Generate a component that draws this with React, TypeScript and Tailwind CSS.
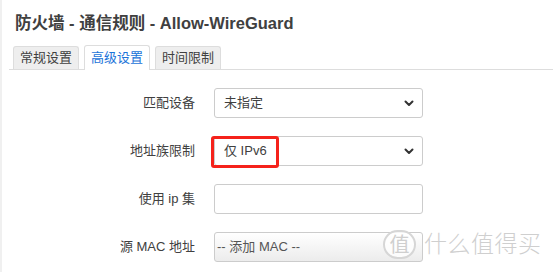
import React from 'react';

const font = { fontFamily: '"Liberation Sans", "Noto Sans CJK SC", sans-serif' };

function Chevron() {
  return (
    <svg width="10" height="7" viewBox="0 0 10 7" className="shrink-0">
      <path d="M1.5 1.5 L5 5 L8.5 1.5" fill="none" stroke="#333" strokeWidth="2" strokeLinecap="round" strokeLinejoin="round" />
    </svg>
  );
}

function Row({ label, children }: { label: string; children: React.ReactNode }) {
  return (
    <div className="flex items-center h-[30px]">
      <div className="w-[194px] pr-[1px] text-right text-[13px] text-[#404040]">{label}</div>
      <div className="ml-[18px] w-[209px]">{children}</div>
    </div>
  );
}

export default function App() {
  const tabs = ['常规设置', '高级设置', '时间限制'];

  return (
    <div style={font} className="relative w-[553px] h-[272px] overflow-hidden bg-white border-l-2 border-[#f0f0f0]">
      {/* Title */}
      <h2 className="pt-[12px] pl-[13px] text-[16.5px] leading-[23px] font-bold text-[#404040]">
        防火墙 - 通信规则 - Allow-WireGuard
      </h2>

      {/* Tabs */}
      <div className="mt-[11px] ml-[7px] flex items-end gap-[5px] pl-[4px] border-b border-[#ddd] h-[24px]">
        {tabs.map((t, i) =>
          i === 1 ? (
            <div
              key={t}
              className="-mb-px h-[25px] px-[6px] flex items-center bg-white border border-b-0 border-[#ddd] rounded-t-[3px] text-[13px] text-[#1a73d9]"
            >
              {t}
            </div>
          ) : (
            <div
              key={t}
              className="h-[23px] px-[6px] flex items-center bg-[#eee] border border-b-0 border-[#ddd] rounded-t-[3px] text-[13px] text-[#404040]"
            >
              {t}
            </div>
          )
        )}
      </div>

      {/* Form */}
      <div className="mt-[18px] flex flex-col gap-[18px]">
        <Row label="匹配设备">
          <div className="h-[30px] flex items-center justify-between pl-[9px] pr-[8px] border border-[#ccc] rounded-[3px] text-[13px] text-[#404040]">
            <span>未指定</span>
            <Chevron />
          </div>
        </Row>
        <Row label="地址族限制">
          <div className="relative h-[30px] flex items-center justify-between pl-[9px] pr-[8px] border border-[#ccc] rounded-[3px] text-[13px] text-[#404040]">
            <span>仅 IPv6</span>
            <Chevron />
            <div className="absolute -left-[4px] -top-[1px] w-[68px] h-[32px] border-[3px] border-[#f5221b] rounded-[3px]" />
          </div>
        </Row>
        <Row label="使用 ip 集">
          <div className="h-[30px] border border-[#ccc] rounded-[3px]" />
        </Row>
        <Row label="源 MAC 地址">
          <div className="h-[30px] flex items-center pl-[2px] border border-[#ccc] rounded-[3px] bg-gradient-to-b from-white to-[#ececec] text-[13px] text-[#555]">
            -- 添加 MAC --
          </div>
        </Row>
      </div>

      {/* Watermark */}
      <div className="absolute left-[381px] top-[230px] flex items-center gap-[8px] text-[#cfcfcf]">
        <div className="w-[33px] h-[29px] rounded-full border-2 border-[#d6d6d6] bg-white/80 flex items-center justify-center text-[20px] leading-none">
          值
        </div>
        <div className="text-[23px] leading-none font-light tracking-[0.5px]">什么值得买</div>
      </div>
    </div>
  );
}
